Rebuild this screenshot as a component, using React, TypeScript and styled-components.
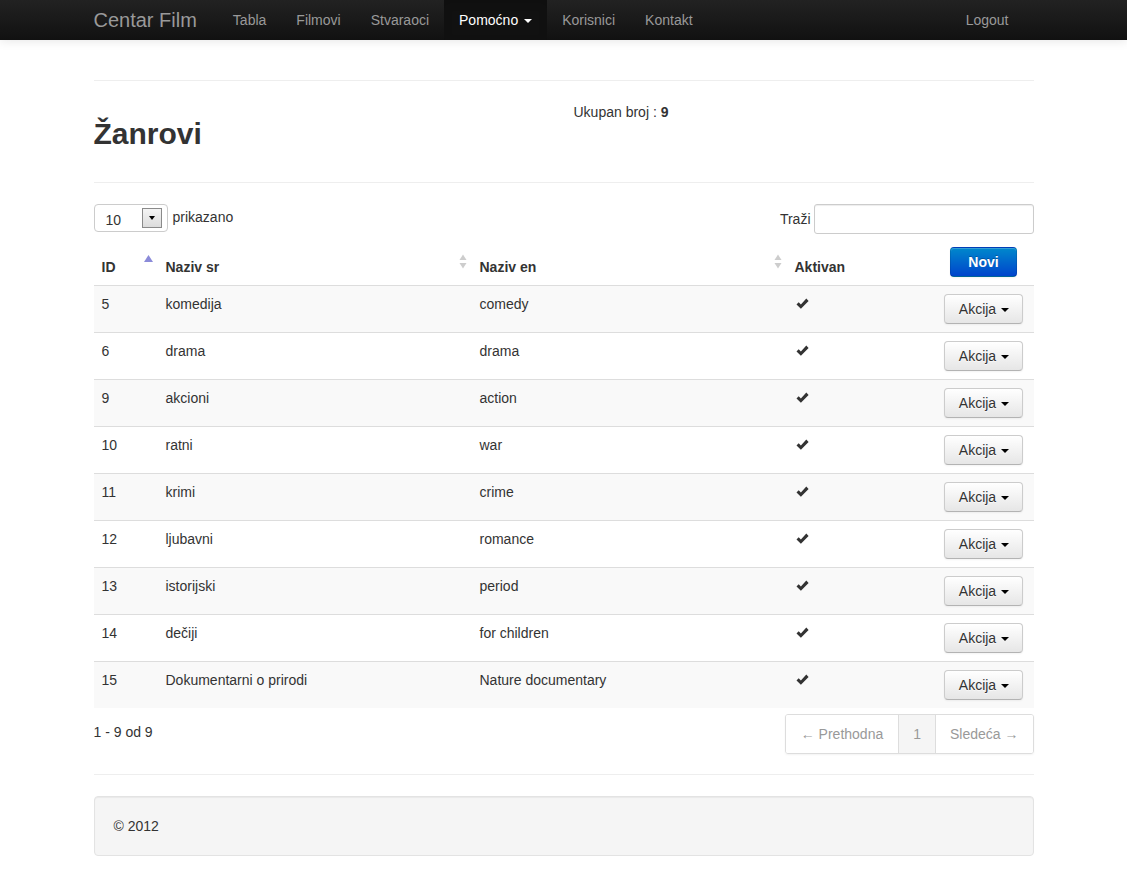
import React from "react";
import styled, { createGlobalStyle } from "styled-components";

const GlobalStyle = createGlobalStyle`
  html, body { margin: 0; padding: 0; background: #fff; }
  body {
    font-family: "Liberation Sans", Arial, Helvetica, sans-serif;
    font-size: 14px;
    line-height: 20px;
    color: #333;
  }
  * { box-sizing: border-box; }
`;

const NavBar = styled.header`
  height: 40px;
  background: linear-gradient(to bottom, #222222, #111111);
  box-shadow: 0 1px 10px rgba(0, 0, 0, 0.1);
  position: relative;
  z-index: 2;
`;

const Container = styled.div`
  width: 940px;
  margin: 0 auto;
`;

const NavInner = styled(Container)`
  display: flex;
  align-items: stretch;
  height: 40px;
`;

const Brand = styled.a`
  font-size: 20px;
  line-height: 20px;
  padding: 10px 21px 10px 0;
  color: #999;
  text-decoration: none;
`;

const NavList = styled.ul<{ $right?: boolean }>`
  display: flex;
  list-style: none;
  margin: 0 ${(p) => (p.$right ? "10px" : "0")} 0 ${(p) => (p.$right ? "auto" : "0")};
  padding: 0;
`;

const NavLink = styled.a<{ $active?: boolean }>`
  display: flex;
  align-items: center;
  padding: 10px 15px;
  line-height: 20px;
  font-size: 14px;
  color: ${(p) => (p.$active ? "#fff" : "#999")};
  background: ${(p) => (p.$active ? "#111" : "transparent")};
  box-shadow: ${(p) => (p.$active ? "inset 0 3px 8px rgba(0,0,0,0.125)" : "none")};
  text-decoration: none;
`;

const NavCaret = styled.span`
  display: inline-block;
  width: 0;
  height: 0;
  margin-left: 6px;
  margin-top: 1px;
  border-top: 4px solid #fff;
  border-left: 4px solid transparent;
  border-right: 4px solid transparent;
`;

const Main = styled(Container)`
  padding-top: 20px;
  padding-bottom: 20px;
`;

const Divider = styled.hr`
  margin: 20px 0;
  height: 0;
  border: 0;
  border-top: 1px solid #eee;
  border-bottom: 1px solid #fff;
`;

const HeaderRow = styled.div`
  display: grid;
  grid-template-columns: 460px 460px;
  column-gap: 20px;
`;

const Title = styled.h1`
  margin: 14px 0 10px;
  font-size: 30px;
  line-height: 36px;
  font-weight: bold;
  color: #333;
`;

const Count = styled.div`
  line-height: 20px;
`;

const Controls = styled.div`
  display: flex;
  justify-content: space-between;
  align-items: flex-start;
  height: 30px;
`;

const ControlLabel = styled.label`
  display: flex;
  align-items: center;
  gap: 5px;
`;

const FakeSelect = styled.div`
  width: 74px;
  height: 28px;
  border: 1px solid #ccc;
  border-radius: 4px;
  background: #fff;
  display: flex;
  align-items: center;
  padding-left: 11px;
  padding-right: 5px;
`;

const SelectValue = styled.span`
  flex: 1;
  padding-top: 3px;
`;

const ArrowBox = styled.span`
  width: 20px;
  height: 20px;
  border: 1px solid #8a8a8a;
  background: linear-gradient(to bottom, #f4f4f4, #dcdcdc);
  display: flex;
  align-items: center;
  justify-content: center;
`;

const ArrowTri = styled.span`
  width: 0;
  height: 0;
  border-top: 4px solid #000;
  border-left: 3.5px solid transparent;
  border-right: 3.5px solid transparent;
`;

const LabelText = styled.span`
  margin-top: -2px;
`;

const SearchLabel = styled.label`
  display: flex;
  align-items: center;
  gap: 3px;
  height: 30px;
`;

const SearchInput = styled.input`
  width: 220px;
  height: 30px;
  border: 1px solid #ccc;
  border-radius: 3px;
  box-shadow: inset 0 1px 1px rgba(0, 0, 0, 0.075);
  padding: 4px 6px;
  font: inherit;
`;

const Table = styled.table`
  width: 100%;
  margin-top: 5px;
  margin-bottom: 6px;
  border-collapse: separate;
  border-spacing: 0;
  table-layout: fixed;
`;

const Th = styled.th<{ $center?: boolean }>`
  position: relative;
  padding: 8px;
  text-align: ${(p) => (p.$center ? "center" : "left")};
  vertical-align: bottom;
  font-weight: bold;
  line-height: 20px;
`;

const Row = styled.tr<{ $striped?: boolean }>`
  background: ${(p) => (p.$striped ? "#f9f9f9" : "#fff")};
`;

const Td = styled.td<{ $center?: boolean }>`
  padding: 8px;
  border-top: 1px solid #ddd;
  vertical-align: top;
  line-height: 20px;
  text-align: ${(p) => (p.$center ? "center" : "left")};
`;

const SortIcon = styled.span<{ $top: number }>`
  position: absolute;
  right: 5px;
  top: ${(p) => p.$top}px;
  display: block;
  line-height: 0;
`;

const CheckIcon = styled.svg`
  display: block;
  margin-top: 3px;
  margin-left: 1px;
`;

const PrimaryButton = styled.button`
  font-family: inherit;
  font-size: 14px;
  font-weight: bold;
  line-height: 20px;
  padding: 4px 17px;
  color: #fff;
  text-shadow: 0 -1px 0 rgba(0, 0, 0, 0.25);
  background: linear-gradient(to bottom, #0088cc, #0044cc);
  border: 1px solid rgba(0, 0, 0, 0.1);
  border-bottom-color: rgba(0, 0, 0, 0.25);
  border-radius: 4px;
  box-shadow: inset 0 1px 0 rgba(255, 255, 255, 0.2), 0 1px 2px rgba(0, 0, 0, 0.05);
`;

const ActionButton = styled.button`
  display: inline-flex;
  align-items: center;
  font-family: inherit;
  font-size: 14px;
  line-height: 20px;
  padding: 4px 13px 4px 14px;
  color: #333;
  text-shadow: 0 1px 1px rgba(255, 255, 255, 0.75);
  background: linear-gradient(to bottom, #ffffff, #e6e6e6);
  border: 1px solid #ccc;
  border-bottom-color: #b3b3b3;
  border-radius: 4px;
  box-shadow: inset 0 1px 0 rgba(255, 255, 255, 0.2), 0 1px 2px rgba(0, 0, 0, 0.05);
`;

const BtnCaret = styled.span`
  display: inline-block;
  width: 0;
  height: 0;
  margin-left: 5px;
  margin-top: 1px;
  border-top: 4px solid #000;
  border-left: 4px solid transparent;
  border-right: 4px solid transparent;
`;

const BottomRow = styled.div`
  display: flex;
  justify-content: space-between;
  align-items: flex-start;
`;

const Info = styled.div`
  padding-top: 8px;
`;

const Pager = styled.ul`
  display: flex;
  list-style: none;
  margin: 0;
  padding: 0;
  border: 1px solid #ddd;
  border-radius: 3px;
  box-shadow: 0 1px 2px rgba(0, 0, 0, 0.05);
  overflow: hidden;
`;

const PageItem = styled.li<{ $active?: boolean }>`
  padding: 0 14px;
  line-height: 38px;
  color: #999;
  background: ${(p) => (p.$active ? "#f5f5f5" : "#fff")};
  & + & {
    border-left: 1px solid #ddd;
  }
  &:first-child {
    padding-left: 15px;
    padding-right: 15px;
  }
`;

const Well = styled.footer`
  padding: 19px;
  background: #f5f5f5;
  border: 1px solid #e3e3e3;
  border-radius: 4px;
  box-shadow: inset 0 1px 1px rgba(0, 0, 0, 0.05);
`;

const rows: [number, string, string][] = [
  [5, "komedija", "comedy"],
  [6, "drama", "drama"],
  [9, "akcioni", "action"],
  [10, "ratni", "war"],
  [11, "krimi", "crime"],
  [12, "ljubavni", "romance"],
  [13, "istorijski", "period"],
  [14, "dečiji", "for children"],
  [15, "Dokumentarni o prirodi", "Nature documentary"],
];

const SortBoth = () => (
  <SortIcon $top={15}>
    <svg width="8" height="16" viewBox="0 0 8 16">
      <polygon points="0.5,6 4,0.5 7.5,6" fill="#cdcdcd" />
      <polygon points="0.5,9 7.5,9 4,14.5" fill="#cdcdcd" />
    </svg>
  </SortIcon>
);

const SortAsc = () => (
  <SortIcon $top={16}>
    <svg width="9" height="7" viewBox="0 0 9 7">
      <polygon points="0,7 4.5,0 9,7" fill="#8b8bd9" />
    </svg>
  </SortIcon>
);

const Check = () => (
  <CheckIcon width="14" height="14" viewBox="0 0 14 14">
    <polygon points="0.5,7.4 2.7,5.2 4.9,7.4 10.3,1.6 12.6,3.9 4.9,11.8" fill="#333" />
  </CheckIcon>
);

export default function App() {
  return (
    <>
      <GlobalStyle />
      <NavBar>
        <NavInner>
          <Brand href="#">Centar Film</Brand>
          <NavList>
            <li><NavLink href="#">Tabla</NavLink></li>
            <li><NavLink href="#">Filmovi</NavLink></li>
            <li><NavLink href="#">Stvaraoci</NavLink></li>
            <li>
              <NavLink href="#" $active>
                Pomoćno
                <NavCaret />
              </NavLink>
            </li>
            <li><NavLink href="#">Korisnici</NavLink></li>
            <li><NavLink href="#">Kontakt</NavLink></li>
          </NavList>
          <NavList $right>
            <li><NavLink href="#">Logout</NavLink></li>
          </NavList>
        </NavInner>
      </NavBar>
      <Main>
        <Divider />
        <HeaderRow>
          <Title>Žanrovi</Title>
          <Count>
            Ukupan broj : <b>9</b>
          </Count>
        </HeaderRow>
        <Divider />
        <Controls>
          <ControlLabel>
            <FakeSelect>
              <SelectValue>10</SelectValue>
              <ArrowBox>
                <ArrowTri />
              </ArrowBox>
            </FakeSelect>
            <LabelText>prikazano</LabelText>
          </ControlLabel>
          <SearchLabel>
            <span>Traži</span>
            <SearchInput type="text" />
          </SearchLabel>
        </Controls>
        <Table>
          <colgroup>
            <col style={{ width: 64 }} />
            <col style={{ width: 314 }} />
            <col style={{ width: 315 }} />
            <col style={{ width: 147 }} />
            <col style={{ width: 100 }} />
          </colgroup>
          <thead>
            <tr>
              <Th>
                ID
                <SortAsc />
              </Th>
              <Th>
                Naziv sr
                <SortBoth />
              </Th>
              <Th>
                Naziv en
                <SortBoth />
              </Th>
              <Th>Aktivan</Th>
              <Th $center>
                <PrimaryButton>Novi</PrimaryButton>
              </Th>
            </tr>
          </thead>
          <tbody>
            {rows.map(([id, sr, en], i) => (
              <Row key={id} $striped={i % 2 === 0}>
                <Td>{id}</Td>
                <Td>{sr}</Td>
                <Td>{en}</Td>
                <Td>
                  <Check />
                </Td>
                <Td $center>
                  <ActionButton>
                    Akcija
                    <BtnCaret />
                  </ActionButton>
                </Td>
              </Row>
            ))}
          </tbody>
        </Table>
        <BottomRow>
          <Info>1 - 9 od 9</Info>
          <Pager>
            <PageItem>← Prethodna</PageItem>
            <PageItem $active>1</PageItem>
            <PageItem>Sledeća →</PageItem>
          </Pager>
        </BottomRow>
        <Divider />
        <Well>© 2012</Well>
      </Main>
    </>
  );
}
